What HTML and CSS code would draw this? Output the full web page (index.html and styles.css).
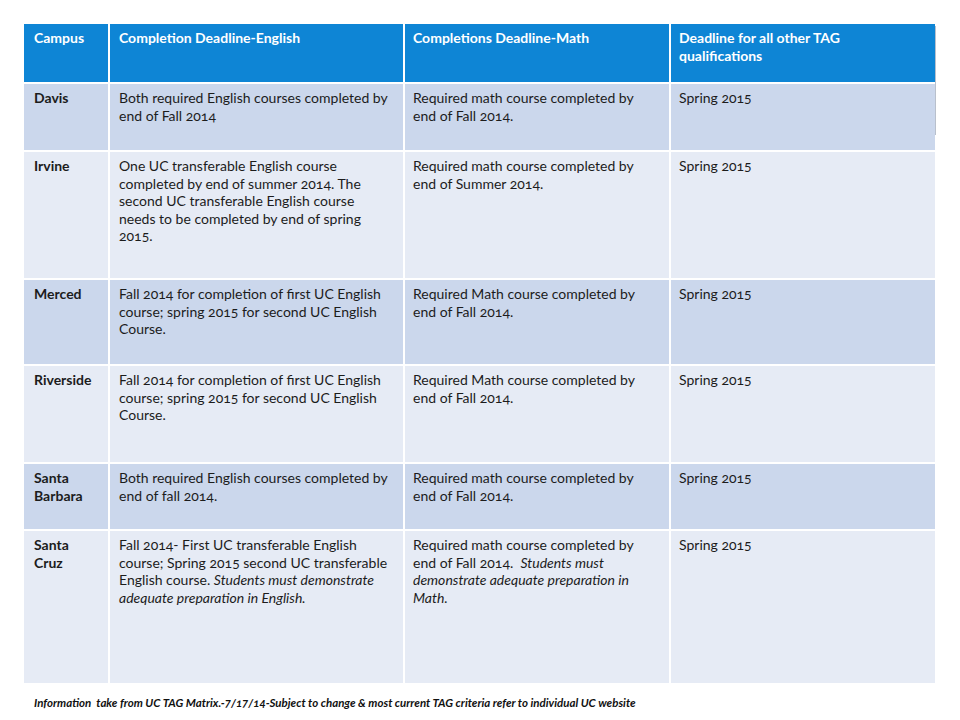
FILE: index.html
```html
<!DOCTYPE html>
<html lang="en">
<head>
<meta charset="utf-8">
<title>UC TAG Deadlines</title>
<link rel="stylesheet" href="styles.css">
</head>
<body>
<div class="slide">
  <div class="table-wrap">
    <table class="tag-table">
      <colgroup>
        <col class="c-campus">
        <col class="c-eng">
        <col class="c-math">
        <col class="c-other">
      </colgroup>
      <thead>
        <tr class="r-head">
          <th>Campus</th>
          <th>Completion Deadline-English</th>
          <th>Completions Deadline-Math</th>
          <th>Deadline for all other TAG<br>qualifications</th>
        </tr>
      </thead>
      <tbody>
        <tr class="odd r-davis">
          <td class="campus">Davis</td>
          <td>Both required English courses completed by<br>end of Fall 2014</td>
          <td>Required math course completed by<br>end of Fall 2014.</td>
          <td>Spring 2015</td>
        </tr>
        <tr class="even r-irvine">
          <td class="campus">Irvine</td>
          <td>One UC transferable English course<br>completed by end of summer 2014. The<br>second UC transferable English course<br>needs to be completed by end of spring<br>2015.</td>
          <td>Required math course completed by<br>end of Summer 2014.</td>
          <td>Spring 2015</td>
        </tr>
        <tr class="odd r-merced">
          <td class="campus">Merced</td>
          <td>Fall 2014 for completion of first UC English<br>course; spring 2015 for second UC English<br>Course.</td>
          <td>Required Math course completed by<br>end of Fall 2014.</td>
          <td>Spring 2015</td>
        </tr>
        <tr class="even r-riverside">
          <td class="campus">Riverside</td>
          <td>Fall 2014 for completion of first UC English<br>course; spring 2015 for second UC English<br>Course.</td>
          <td>Required Math course completed by<br>end of Fall 2014.</td>
          <td>Spring 2015</td>
        </tr>
        <tr class="odd r-sb">
          <td class="campus">Santa<br>Barbara</td>
          <td>Both required English courses completed by<br>end of fall 2014.</td>
          <td>Required math course completed by<br>end of Fall 2014.</td>
          <td>Spring 2015</td>
        </tr>
        <tr class="even r-sc">
          <td class="campus">Santa<br>Cruz</td>
          <td>Fall 2014- First UC transferable English<br>course; Spring 2015 second UC transferable<br>English course. <em>Students must demonstrate<br>adequate preparation in English.</em></td>
          <td>Required math course completed by<br>end of Fall 2014.&nbsp; <em>Students must<br>demonstrate adequate preparation in<br>Math.</em></td>
          <td>Spring 2015</td>
        </tr>
      </tbody>
    </table>
    <span class="edge-line"></span>
  </div>
  <p class="footnote">Information&nbsp; take from UC TAG Matrix.-7/17/14-Subject to change &amp; most current TAG criteria refer to individual UC website</p>
</div>
</body>
</html>
```

FILE: styles.css
```css
html, body {
  margin: 0;
  padding: 0;
  background: #ffffff;
}

.slide {
  width: 960px;
  height: 720px;
  box-sizing: border-box;
  padding: 24px 0 0 24px;
  font-family: Lato, "Open Sans", "Liberation Sans", sans-serif;
  color: #1c1c1c;
}

.table-wrap {
  position: relative;
  width: 911px;
}

.tag-table {
  width: 911px;
  table-layout: fixed;
  border-collapse: separate;
  border-spacing: 0;
  font-size: 14px;
  line-height: 17.5px;
  font-variant-numeric: oldstyle-nums;
}

.c-campus { width: 86px; }
.c-eng { width: 295px; }
.c-math { width: 266px; }
.c-other { width: 264px; }

.tag-table th,
.tag-table td {
  box-sizing: border-box;
  vertical-align: top;
  text-align: left;
  padding: 5px 8px 0 10px;
  border-right: 2px solid #ffffff;
  border-bottom: 2px solid #ffffff;
}

.tag-table th:last-child,
.tag-table td:last-child {
  border-right: 0;
}

.tag-table tbody tr:last-child td {
  border-bottom: 0;
}

.tag-table th {
  background: #0e85d5;
  color: #ffffff;
  font-weight: 700;
}

.tag-table td:nth-child(2) { padding-left: 9px; }
.tag-table td:nth-child(3),
.tag-table th:nth-child(3) { padding-left: 8px; }
.tag-table td:nth-child(4),
.tag-table th:nth-child(4) { padding-left: 8px; }
.tag-table th:nth-child(2) { padding-left: 9px; }

.odd td { background: #cbd7ec; }
.even td { background: #e6ebf5; }

.campus { font-weight: 700; }

.tag-table em { font-style: italic; }

.r-head { height: 60px; }
.r-davis { height: 68px; }
.r-irvine { height: 128px; }
.r-merced { height: 86px; }
.r-riverside { height: 98px; }
.r-sb { height: 67px; }
.r-sc { height: 152px; }

.edge-line {
  position: absolute;
  left: 911px;
  top: 2px;
  width: 1px;
  height: 109px;
  background: #b9c0cc;
}

.footnote {
  margin: 13px 0 0 10px;
  font-size: 11.5px;
  font-weight: 700;
  font-style: italic;
  color: #111111;
  font-variant-numeric: oldstyle-nums;
}
```
